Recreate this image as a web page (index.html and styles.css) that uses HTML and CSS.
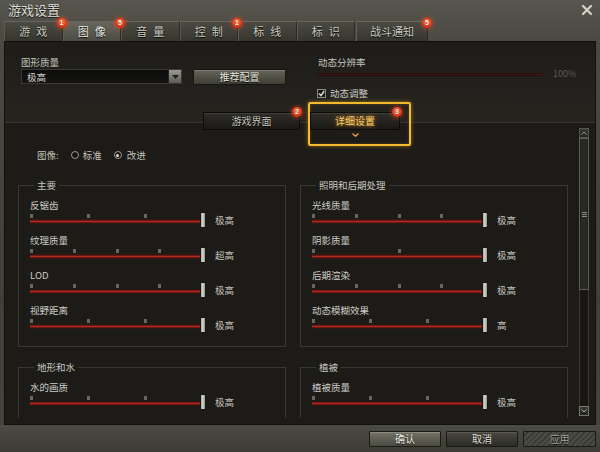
FILE: index.html
```html
<!DOCTYPE html>
<html lang="zh-CN">
<head>
<meta charset="utf-8">
<title>游戏设置</title>
<link rel="stylesheet" href="styles.css">
</head>
<body>
<div class="window">
  <header class="titlebar">
    <span class="title">游戏设置</span>
    <svg class="close" width="12" height="12" viewBox="0 0 12 12"><path d="M2 2 L10 10 M10 2 L2 10" stroke="#cfcfc7" stroke-width="2.4" stroke-linecap="round"/></svg>
  </header>
  <nav class="tabs">
    <div class="tab spaced">游戏<span class="badge">1</span></div>
    <div class="tab spaced active">图像<span class="badge">5</span></div>
    <div class="tab spaced">音量</div>
    <div class="tab spaced">控制<span class="badge">1</span></div>
    <div class="tab spaced">标线</div>
    <div class="tab spaced">标识</div>
    <div class="tab wide">战斗通知<span class="badge">5</span></div>
  </nav>
  <main class="panel">
    <section class="top">
      <div class="top-row">
        <div class="col-left">
          <div class="label">图形质量</div>
          <div class="ctrl-row">
            <div class="select">
              <span class="select-text">极高</span>
              <span class="select-btn"><svg width="7" height="4" viewBox="0 0 7 4"><path d="M0 0 H7 L3.5 4 Z" fill="#1e1e1b"/></svg></span>
            </div>
            <div class="btn">推荐配置</div>
          </div>
        </div>
        <div class="col-right">
          <div class="label">动态分辨率</div>
          <div class="res-row"><div class="res-track"></div><span class="res-val">100%</span></div>
          <div class="check-row">
            <span class="checkbox"><svg width="7" height="7" viewBox="0 0 7 7"><path d="M1 3.5 L3 5.5 L6.2 1" fill="none" stroke="#d8d8d0" stroke-width="1.5"/></svg></span>
            <span class="check-label">动态调整</span>
          </div>
        </div>
      </div>
      <div class="subtabs">
        <div class="subtab">游戏界面<span class="badge sb">2</span></div>
        <div class="subtab-frame">
          <div class="subtab current">详细设置<span class="badge sb">3</span></div>
          <svg class="chev" width="7" height="4" viewBox="0 0 7 4"><path d="M0.5 0.5 L3.5 3.3 L6.5 0.5" fill="none" stroke="#e8a83a" stroke-width="1.2"/></svg>
        </div>
      </div>
    </section>
    <section class="scroll">
      <div class="scroll-content">
        <div class="mode-row">
          <span>图像:</span>
          <span class="radio"></span><span class="radio-label">标准</span>
          <span class="radio on"></span><span class="radio-label">改进</span>
        </div>
        <div class="groups">
          <div class="group">
            <div class="gtitle">主要</div>
            <div class="slider">
              <div class="slabel">反锯齿</div>
              <div class="srow"><div class="sctl"><div class="ticks"><i></i><i></i><i></i><i></i></div><div class="strack"></div><span class="knob"></span></div><span class="sval">极高</span></div>
            </div>
            <div class="slider">
              <div class="slabel">纹理质量</div>
              <div class="srow"><div class="sctl"><div class="ticks"><i></i><i></i><i></i><i></i><i></i></div><div class="strack"></div><span class="knob"></span></div><span class="sval">超高</span></div>
            </div>
            <div class="slider">
              <div class="slabel">LOD</div>
              <div class="srow"><div class="sctl"><div class="ticks"><i></i><i></i><i></i><i></i><i></i></div><div class="strack"></div><span class="knob"></span></div><span class="sval">极高</span></div>
            </div>
            <div class="slider">
              <div class="slabel">视野距离</div>
              <div class="srow"><div class="sctl"><div class="ticks"><i></i><i></i><i></i><i></i></div><div class="strack"></div><span class="knob"></span></div><span class="sval">极高</span></div>
            </div>
          </div>
          <div class="group">
            <div class="gtitle">照明和后期处理</div>
            <div class="slider">
              <div class="slabel">光线质量</div>
              <div class="srow"><div class="sctl"><div class="ticks"><i></i><i></i><i></i><i></i><i></i></div><div class="strack"></div><span class="knob"></span></div><span class="sval">极高</span></div>
            </div>
            <div class="slider">
              <div class="slabel">阴影质量</div>
              <div class="srow"><div class="sctl"><div class="ticks"><i></i><i></i><i></i></div><div class="strack"></div><span class="knob"></span></div><span class="sval">极高</span></div>
            </div>
            <div class="slider">
              <div class="slabel">后期渲染</div>
              <div class="srow"><div class="sctl"><div class="ticks"><i></i><i></i><i></i><i></i><i></i></div><div class="strack"></div><span class="knob"></span></div><span class="sval">极高</span></div>
            </div>
            <div class="slider">
              <div class="slabel">动态模糊效果</div>
              <div class="srow"><div class="sctl"><div class="ticks"><i></i><i></i><i></i><i></i></div><div class="strack"></div><span class="knob"></span></div><span class="sval">高</span></div>
            </div>
          </div>
          <div class="group tall">
            <div class="gtitle">地形和水</div>
            <div class="slider">
              <div class="slabel">水的画质</div>
              <div class="srow"><div class="sctl"><div class="ticks"><i></i><i></i><i></i><i></i></div><div class="strack"></div><span class="knob"></span></div><span class="sval">极高</span></div>
            </div>
          </div>
          <div class="group tall">
            <div class="gtitle">植被</div>
            <div class="slider">
              <div class="slabel">植被质量</div>
              <div class="srow"><div class="sctl"><div class="ticks"><i></i><i></i><i></i><i></i></div><div class="strack"></div><span class="knob"></span></div><span class="sval">极高</span></div>
            </div>
          </div>
        </div>
      </div>
      <div class="scrollbar">
        <div class="sb-btn"><svg width="6" height="4" viewBox="0 0 6 4"><path d="M0.5 3.5 L3 1 L5.5 3.5" fill="none" stroke="#9a9a92" stroke-width="1"/></svg></div>
        <div class="sb-track">
          <div class="sb-thumb"><svg width="5" height="5" viewBox="0 0 5 5"><path d="M0 0.5 H5 M0 2.5 H5 M0 4.5 H5" stroke="#8a8a82" stroke-width="1"/></svg></div>
        </div>
        <div class="sb-btn down"><svg width="6" height="4" viewBox="0 0 6 4"><path d="M0.5 0.5 L3 3 L5.5 0.5" fill="none" stroke="#b0b0a8" stroke-width="1"/></svg></div>
      </div>
    </section>
  </main>
  <footer class="bottombar">
    <div class="fbtn ok">确认</div>
    <div class="fbtn cancel">取消</div>
    <div class="fbtn apply">应用</div>
  </footer>
</div>
</body>
</html>
```

FILE: styles.css
```css
* { box-sizing: border-box; }
html, body { margin: 0; padding: 0; }
body {
  width: 600px;
  height: 452px;
  overflow: hidden;
  background: #3e3e37;
  font-family: "Noto Sans CJK SC", "Noto Sans", sans-serif;
  font-size: 9.5px;
  line-height: 12px;
  color: #c9c9c1;
}
.window {
  display: flex;
  flex-direction: column;
  height: 452px;
  background: linear-gradient(#56564e, #4a4a43 41px, #3f3f38 300px, #44443c);
}

/* title bar */
.titlebar {
  height: 19px;
  flex: none;
  display: flex;
  align-items: center;
  justify-content: space-between;
  padding: 0 7px 0 8px;
}
.title {
  font-size: 13px;
  line-height: 16px;
  color: #dedcd4;
  text-shadow: 0 1px 1px #111;
}
.close { display: block; }

/* tabs */
.tabs {
  height: 22px;
  flex: none;
  display: flex;
  align-items: flex-end;
  padding-left: 4px;
}
.tab {
  position: relative;
  width: 58.5px;
  height: 20px;
  border: 1px solid #2a2a25;
  border-top-color: #66665c;
  border-left-color: #5a5a51;
  border-bottom: 0;
  background: linear-gradient(#4a4a42, #36362f);
  color: #cacac2;
  font-size: 11px;
  line-height: 19px;
  text-align: center;
  text-shadow: 0 1px 1px #000;
}
.tab.spaced { letter-spacing: 6px; text-indent: 6px; }
.tab.active {
  background: linear-gradient(#66665d, #4c4c44);
  color: #ecece4;
}
.tab.wide { width: 72px; margin-left: 1px; }

.badge {
  position: absolute;
  top: -4px;
  right: -5px;
  width: 10px;
  height: 10px;
  border-radius: 50%;
  background: radial-gradient(circle at 50% 40%, #ff8a50, #e43c1a 55%, #a81a08);
  box-shadow: 0 0 4px 1px rgba(255, 70, 20, 0.55);
  color: #fff;
  font-family: "Liberation Sans", sans-serif;
  font-size: 7px;
  font-weight: bold;
  line-height: 10px;
  letter-spacing: 0;
  text-indent: 0;
  text-align: center;
  text-shadow: 0 0 1px #600;
  z-index: 3;
}
.badge.sb { top: -6px; right: -3px; }

/* panel */
.panel {
  height: 384px;
  flex: none;
  margin: 0 4px;
  border: 1px solid #10100e;
  background: #1c1b18;
  display: flex;
  flex-direction: column;
}
.top {
  height: 81px;
  flex: none;
  border-bottom: 1px solid #34332e;
  background: linear-gradient(#1d1c19, #25241f);
  padding-top: 14px;
}
.top-row {
  display: flex;
  padding-left: 16px;
}
.col-left { width: 297px; }
.col-right { flex: 1; }
.label { color: #c4c4bc; }
.ctrl-row {
  display: flex;
  align-items: flex-start;
  margin-top: 1px;
}
.select {
  width: 161px;
  height: 15px;
  display: flex;
  align-items: center;
  justify-content: space-between;
  border: 1px solid #3a3935;
  background: linear-gradient(#0c0c0a, #151412);
}
.select-text { padding-left: 5px; color: #d0d0c8; }
.select-btn {
  width: 13px;
  height: 13px;
  display: flex;
  align-items: center;
  justify-content: center;
  background: linear-gradient(#9a9a92, #5c5c54);
  border-left: 1px solid #222;
}
.select-btn svg { display: block; }
.btn {
  margin-left: 11px;
  width: 93px;
  height: 16px;
  border: 1px solid #151513;
  border-radius: 1px;
  background: linear-gradient(#64645a, #3e3e36);
  box-shadow: inset 0 1px 0 #7a7a70;
  color: #e4e4dc;
  font-size: 10px;
  line-height: 14px;
  text-align: center;
  text-shadow: 0 1px 1px #000;
}
.res-row {
  height: 12px;
  display: flex;
  align-items: center;
}
.res-track {
  width: 225px;
  height: 3px;
  background: linear-gradient(#1e0a08, #3e1612 50%, #1e0a08);
}
.res-val {
  margin-left: 10px;
  color: #5a5a54;
  font-size: 9px;
}
.check-row {
  margin-top: 7px;
  height: 12px;
  display: flex;
  align-items: center;
  margin-left: -1px;
}
.checkbox {
  width: 9px;
  height: 9px;
  border: 1px solid #8a8a82;
  background: #1a1a17;
  display: flex;
  align-items: center;
  justify-content: center;
}
.checkbox svg { display: block; }
.check-label { margin-left: 4px; color: #cfcfc7; }

/* sub tabs */
.subtabs {
  position: relative;
  z-index: 2;
  display: flex;
  align-items: flex-start;
  padding-left: 198px;
  margin-top: 3px;
}
.subtab {
  position: relative;
  width: 97px;
  height: 18px;
  margin-top: 10px;
  border: 1px solid #0b0b09;
  background: linear-gradient(#2e2d29, #1a1916);
  box-shadow: inset 0 1px 0 #3e3d38;
  color: #c4c4bc;
  font-size: 10px;
  line-height: 16px;
  text-align: center;
  text-shadow: 0 1px 1px #000;
}
.subtab-frame {
  margin-left: 8px;
  width: 103px;
  height: 44px;
  border: 2px solid #f2ba2c;
  border-radius: 2px;
  padding: 8px 9px 0 0;
  box-shadow: 0 0 4px rgba(240, 170, 30, 0.55), inset 0 0 3px rgba(240, 170, 30, 0.3);
  display: flex;
  flex-direction: column;
  align-items: center;
}
.subtab.current {
  width: 90px;
  margin-top: 0;
  color: #f4cc6a;
  text-shadow: 0 0 4px rgba(255, 160, 30, 0.9);
}
.chev { display: block; margin-top: 3px; }

/* scroll area */
.scroll {
  flex: 1;
  display: flex;
  padding-bottom: 6px;
  min-height: 0;
}
.scroll-content {
  flex: 1;
  overflow: hidden;
  padding-top: 26px;
}
.mode-row {
  height: 12px;
  display: flex;
  align-items: center;
  padding-left: 32px;
  color: #c4c4bc;
}
.radio {
  width: 8px;
  height: 8px;
  margin-left: 12px;
  border: 1px solid #9a9a92;
  border-radius: 50%;
  background: #151412;
  display: flex;
  align-items: center;
  justify-content: center;
}
.radio.on::after {
  content: "";
  width: 3px;
  height: 3px;
  border-radius: 50%;
  background: #e0e0d8;
}
.radio-label { margin-left: 4px; }
.radio.on + .radio-label { margin-left: 5px; }

.groups {
  margin-top: 24px;
  margin-left: 13px;
  display: grid;
  grid-template-columns: 268px 268px;
  column-gap: 14px;
  row-gap: 20px;
}
.group {
  border: 1px solid #393833;
  padding: 0 0 13px 11px;
}
.group.tall { padding-bottom: 40px; }
.gtitle {
  width: max-content;
  margin: -7px 0 8px 4px;
  padding: 0 3px;
  background: #1c1b18;
  color: #c8c8c0;
}
.slider + .slider { margin-top: 6px; }
.slabel { color: #cdcdc5; }
.srow {
  margin-top: 1px;
  height: 16px;
  display: flex;
  align-items: center;
}
.sctl {
  position: relative;
  width: 176px;
  height: 16px;
  flex: none;
}
.ticks {
  display: flex;
  justify-content: space-between;
  margin-top: 2px;
  padding-right: 2px;
  height: 4px;
}
.ticks i {
  display: block;
  width: 3px;
  height: 4px;
  background: #66665f;
}
.strack {
  height: 3px;
  margin: 2px 3px 0 0;
  background: linear-gradient(#4e0e0a, #b02a22 50%, #4e0e0a);
  box-shadow: 0 0 2px rgba(170, 30, 20, 0.45);
}
.knob {
  position: absolute;
  right: 0;
  top: 0;
  width: 6px;
  height: 16px;
  border: 1px solid #161614;
  border-radius: 1px;
  background: linear-gradient(90deg, #9a9a92, #e2e2da 35%, #5e5e58 50%, #d2d2ca 65%, #8a8a84);
}
.sval {
  margin-left: 9px;
  color: #c4c4bc;
}

/* scrollbar */
.scrollbar {
  width: 10px;
  height: 288px;
  flex: none;
  margin: 5px 6px 0 0;
  display: flex;
  flex-direction: column;
}
.sb-btn {
  height: 10px;
  flex: none;
  border: 1px solid #55554e;
  background: linear-gradient(#3a3a34, #23231f);
  display: flex;
  align-items: center;
  justify-content: center;
}
.sb-btn.down { border-color: #77776e; }
.sb-btn svg { display: block; }
.sb-track {
  flex: 1;
  border-left: 1px solid #3a3a34;
  border-right: 1px solid #3a3a34;
  background: #181714;
}
.sb-thumb {
  height: 152px;
  margin: 0 -1px;
  border: 1px solid #5e5e56;
  background: linear-gradient(90deg, #23231f, #2c2c27, #23231f);
  display: flex;
  align-items: flex-end;
  justify-content: center;
  padding-bottom: 72px;
}
.sb-thumb svg { display: block; }

/* bottom bar */
.bottombar {
  height: 27px;
  flex: none;
  display: flex;
  align-items: center;
  justify-content: flex-end;
  gap: 5px;
  padding-right: 4px;
  background: linear-gradient(#4c4c44, #3b3b34);
}
.fbtn {
  width: 72px;
  height: 16px;
  border: 1px solid #1a1a17;
  border-radius: 1px;
  font-size: 10px;
  line-height: 14px;
  text-align: center;
  text-shadow: 0 1px 1px #000;
}
.fbtn.ok {
  background: linear-gradient(#727266, #4a4a40);
  box-shadow: inset 0 1px 0 #8a8a7e;
  color: #eeeee6;
}
.fbtn.cancel {
  background: linear-gradient(#4a4a42, #2c2c27);
  box-shadow: inset 0 1px 0 #5a5a52;
  color: #e0e0d8;
}
.fbtn.apply {
  width: 73px;
  background: repeating-linear-gradient(135deg, #4c4c46 0 2px, #3c3c36 2px 4px);
  color: #a0a098;
}
```
